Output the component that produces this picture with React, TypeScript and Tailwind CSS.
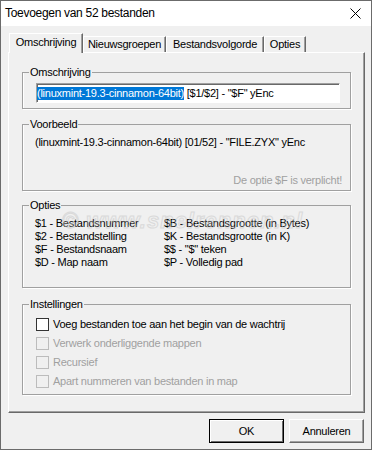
const font = "font-['Liberation_Sans',Arial,sans-serif]";

function Group({
  title,
  className,
  inner,
  children,
}: {
  title: string;
  className?: string;
  inner: string;
  children: React.ReactNode;
}) {
  return (
    <fieldset
      className={`w-[329px] border border-[#a0a0a0] shadow-[1px_1px_0_#fff,inset_1px_0_0_#fff] ${className ?? ""}`}
    >
      <legend className="ml-[6px] px-[1px] leading-[13px]">{title}</legend>
      <div className={inner}>{children}</div>
    </fieldset>
  );
}

function Tab({ label, w, active }: { label: string; w: string; active?: boolean }) {
  return (
    <div
      className={`${w} ${
        active ? "relative z-10 -mb-px h-[20px] pb-[2px] bg-[#f0f0f0]" : "h-[16px]"
      } flex items-center justify-center border-l border-t border-r border-l-white border-t-white border-r-[#696969] shadow-[inset_-1px_0_0_#a0a0a0] leading-[13px]`}
    >
      {label}
    </div>
  );
}

function Check({ label, disabled }: { label: string; disabled?: boolean }) {
  return (
    <div className="flex h-[19px] items-center gap-[4px]">
      <span
        className={`h-[13px] w-[13px] shrink-0 border ${
          disabled ? "border-[#bcbcbc] bg-[#f0f0f0]" : "border-[#333] bg-white"
        }`}
      />
      <span className={disabled ? "text-[#a0a0a0]" : "text-black"}>{label}</span>
    </div>
  );
}

const options = [
  ["$1 - Bestandsnummer", "$B - Bestandsgrootte (in Bytes)"],
  ["$2 - Bestandstelling", "$K - Bestandsgrootte (in K)"],
  ["$F - Bestandsnaam", '$$ - "$" teken'],
  ["$D - Map naam", "$P - Volledig pad"],
];

export default function App() {
  return (
    <div
      className={`${font} flex h-[450px] w-[372px] flex-col border border-[#6b6b6b] bg-[#f0f0f0] text-[11px] leading-[13px] tracking-[-0.25px] text-black`}
    >
      {/* title bar */}
      <div className="flex h-[25px] shrink-0 items-center justify-between bg-white pl-[4px] pr-[10px] text-[12px] tracking-[-0.3px]">
        <span>Toevoegen van 52 bestanden</span>
        <svg width="11" height="11" viewBox="0 0 11 11">
          <path d="M0.5 0.5 L10.5 10.5 M10.5 0.5 L0.5 10.5" stroke="#000" strokeWidth="1" />
        </svg>
      </div>

      {/* tabs */}
      <div className="ml-[8px] mt-[7px] flex h-[19px] items-end">
        <Tab label="Omschrijving" w="w-[74px]" active />
        <Tab label="Nieuwsgroepen" w="w-[83px]" />
        <Tab label="Bestandsvolgorde" w="w-[98px]" />
        <Tab label="Opties" w="w-[42px]" />
      </div>

      {/* panel */}
      <div className="relative ml-[7px] flex h-[361px] w-[357px] flex-col border border-l-white border-t-white border-r-[#696969] border-b-[#696969] pl-[13px] pt-[13px] shadow-[inset_-1px_-1px_0_#a0a0a0]">
        <Group title="Omschrijving" inner="pb-[5px] pl-[13px] pt-[4px]">
          <div className="flex h-[20px] w-[304px] items-center overflow-hidden border border-l-[#a0a0a0] border-t-[#a0a0a0] border-r-white border-b-white bg-white shadow-[inset_1px_1px_0_#696969]">
            <span className="bg-[#0078d7] text-white">(linuxmint-19.3-cinnamon-64bit)</span>
            <span className="whitespace-pre"> [$1/$2] - "$F" yEnc</span>
          </div>
        </Group>

        <Group title="Voorbeeld" className="mt-[9px]" inner="pb-[3px] pl-[12px] pr-[8px] pt-[5px]">
          <div>(linuxmint-19.3-cinnamon-64bit) [01/52] - "FILE.ZYX" yEnc</div>
          <div className="mt-[25px] text-right text-[#a0a0a0]">De optie $F is verplicht!</div>
        </Group>

        <Group title="Opties" className="mt-[8px]" inner="pb-[18px] pl-[12px] pt-[5px]">
          <div className="grid grid-cols-[129px_1fr]">
            {options.map(([a, b]) => (
              <div key={a} className="contents">
                <span>{a}</span>
                <span>{b}</span>
              </div>
            ))}
          </div>
        </Group>

        <Group title="Instellingen" className="mt-[10px]" inner="pb-[3px] pl-[13px] pt-[4px]">
          <Check label="Voeg bestanden toe aan het begin van de wachtrij" />
          <Check label="Verwerk onderliggende mappen" disabled />
          <Check label="Recursief" disabled />
          <Check label="Apart nummeren van bestanden in map" disabled />
        </Group>

        {/* watermark */}
        <span className="pointer-events-none absolute left-[53px] top-[156px] text-[22px] font-bold italic leading-[24px] tracking-[1px] text-transparent opacity-50 [-webkit-text-stroke:1px_#c4c4c4]">
          © www.snelrennen.nl
        </span>
      </div>

      {/* buttons */}
      <div className="ml-[7px] mt-[6px] flex w-[357px] justify-end gap-[5px] pr-px">
        <button className="flex h-[24px] w-[75px] items-center justify-center border border-[#000] bg-[#f0f0f0] shadow-[inset_1px_1px_0_#fff,inset_-1px_-1px_0_#696969]">
          OK
        </button>
        <button className="flex h-[24px] w-[75px] items-center justify-center border border-l-white border-t-white border-r-[#696969] border-b-[#696969] bg-[#f0f0f0] shadow-[inset_-1px_-1px_0_#a0a0a0]">
          Annuleren
        </button>
      </div>
    </div>
  );
}
